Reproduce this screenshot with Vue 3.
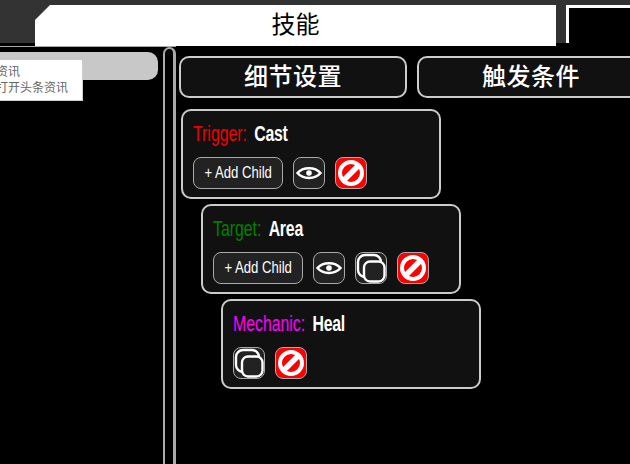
<script setup>
const cards = [
	{ id: 1, depth: 0, type: 'Trigger', color: '#f00000', name: 'Cast', add: true, eye: true, copy: false },
	{ id: 2, depth: 1, type: 'Target', color: '#008000', name: 'Area', add: true, eye: true, copy: true },
	{ id: 3, depth: 2, type: 'Mechanic', color: '#ff00ff', name: 'Heal', add: false, eye: false, copy: true }
]
</script>

<template>
	<div class="page">
		<header class="header">
			<div class="bar">
				<h1 class="title">技能</h1>
				<div class="corner"></div>
			</div>
		</header>

		<div class="body">
			<aside class="side">
				<div class="list">
					<div class="pill"></div>
				</div>
				<div class="track"></div>
				<div class="tip">
					<div>资讯</div>
					<div>打开头条资讯</div>
				</div>
			</aside>

			<main class="main">
				<div class="tabs">
					<button class="tab">细节设置</button>
					<button class="tab">触发条件</button>
				</div>

				<div class="tree">
					<section v-for="c in cards" :key="c.id" class="card" :style="{ marginLeft: c.depth * 20 + 'px' }">
						<div class="label">
							<span :style="{ color: c.color }">{{ c.type }}:</span>
							<b>{{ c.name }}</b>
						</div>
						<div class="actions">
							<button v-if="c.add" class="btn add"><span>+ Add Child</span></button>
							<button v-if="c.eye" class="btn icon">
								<svg viewBox="0 0 30 30" width="30" height="30">
									<path d="M3.500 15C9 8.500 21 8.500 26.500 15C21 21.500 9 21.500 3.500 15Z" fill="none" stroke="#fff" stroke-width="2.500" />
									<circle cx="15" cy="15" r="2.800" fill="#fff" />
								</svg>
							</button>
							<button v-if="c.copy" class="btn icon">
								<svg viewBox="0 0 30 30" width="30" height="30">
									<rect x="2" y="2" width="23" height="22" rx="7" fill="none" stroke="#fff" stroke-width="2.400" />
									<rect x="8" y="8.500" width="20.500" height="20" rx="6" fill="#222" stroke="#fff" stroke-width="2.400" />
								</svg>
							</button>
							<button class="btn icon stop">
								<svg viewBox="0 0 30 30" width="30" height="30">
									<circle cx="15" cy="15" r="11" fill="none" stroke="#fff" stroke-width="4" />
									<path d="M7.500 22.500L22.500 7.500" stroke="#fff" stroke-width="5.500" />
								</svg>
							</button>
						</div>
					</section>
				</div>
			</main>
		</div>
	</div>
</template>

<style>
html, body {
	margin: 0;
	background: #000;
}
</style>

<style scoped>
.page {
	width: 630px;
	height: 464px;
	overflow: hidden;
	background: #000;
	font-family: "Liberation Sans", "Noto Sans CJK SC", sans-serif;
}

.header {
	height: 46px;
}

.bar {
	display: flex;
	gap: 10px;
	box-sizing: border-box;
	height: 43px;
	padding: 5px 0 0 35px;
	background: #333;
}

.title {
	flex: 0 0 521px;
	height: 41px;
	margin: 0;
	background: #fff;
	clip-path: polygon(15px 0, 100% 0, 100% 100%, 0 100%, 0 15px);
	color: #000;
	font: 400 24px/40px "Liberation Serif", "Noto Sans CJK SC", serif;
	text-align: center;
}

.corner {
	flex: 1 0 0;
	background: #000;
	border-top: 3px solid #fff;
	border-left: 3px solid #fff;
}

.body {
	display: flex;
	height: 418px;
}

.side {
	position: relative;
	display: flex;
	flex: 0 0 176px;
	box-sizing: border-box;
	border-top: 1px solid #aaa;
}

.list {
	flex: 0 0 163px;
	padding-top: 5px;
	overflow: hidden;
}

.pill {
	width: 168px;
	height: 28px;
	margin-left: -10px;
	border-radius: 10px;
	background: #c8c8c8;
}

.track {
	box-sizing: border-box;
	flex: 0 0 13px;
	height: 420px;
	border: solid #aaa;
	border-width: 2px 3px 0 2px;
	border-radius: 7px 7px 0 0;
}

.tip {
	position: absolute;
	top: 13px;
	left: -4px;
	box-sizing: border-box;
	width: 86px;
	height: 40px;
	padding: 4px 0 0;
	background: #fff;
	box-shadow: 1px 1px 0 #ccc;
	color: #666;
	font-size: 12px;
	line-height: 16px;
}

.main {
	flex: 1;
	padding: 10px 0 0 3px;
	min-width: 0;
}

.tabs {
	display: flex;
	gap: 10px;
}

.tab {
	flex: 0 0 228px;
	height: 42px;
	padding: 0;
	border: 2px solid #ccc;
	border-radius: 10px;
	background: #111;
	color: #fff;
	font: 500 24px/36px "Liberation Serif", "Noto Sans CJK SC", serif;
	letter-spacing: 0.5px;
}

.tree {
	display: flex;
	flex-direction: column;
	gap: 5px;
	margin: 11px 0 0 2px;
}

.card {
	box-sizing: border-box;
	width: 260px;
	height: 90px;
	padding: 10px;
	border: 2px solid #ccc;
	border-radius: 10px;
	background: #111;
}

.label {
	height: 26px;
	color: #fff;
	font-size: 22px;
	line-height: 26px;
	white-space: nowrap;
	transform: scaleX(0.72);
	transform-origin: left center;
}

.label b {
	margin-left: 10px;
	font-weight: 700;
	letter-spacing: -0.3px;
}

.actions {
	display: flex;
	gap: 10px;
	margin-top: 10px;
}

.btn {
	display: flex;
	align-items: center;
	justify-content: center;
	box-sizing: border-box;
	height: 32px;
	padding: 0;
	border: 1px solid #aaa;
	border-radius: 8px;
	background: #222;
	color: #fff;
	overflow: hidden;
}

.add {
	width: 90px;
	font-family: "Liberation Sans", sans-serif;
	font-size: 16px;
	white-space: nowrap;
}

.add span {
	display: inline-block;
	transform: scaleX(0.82);
}

.icon {
	width: 32px;
}

.stop {
	background: #f00;
}
</style>
